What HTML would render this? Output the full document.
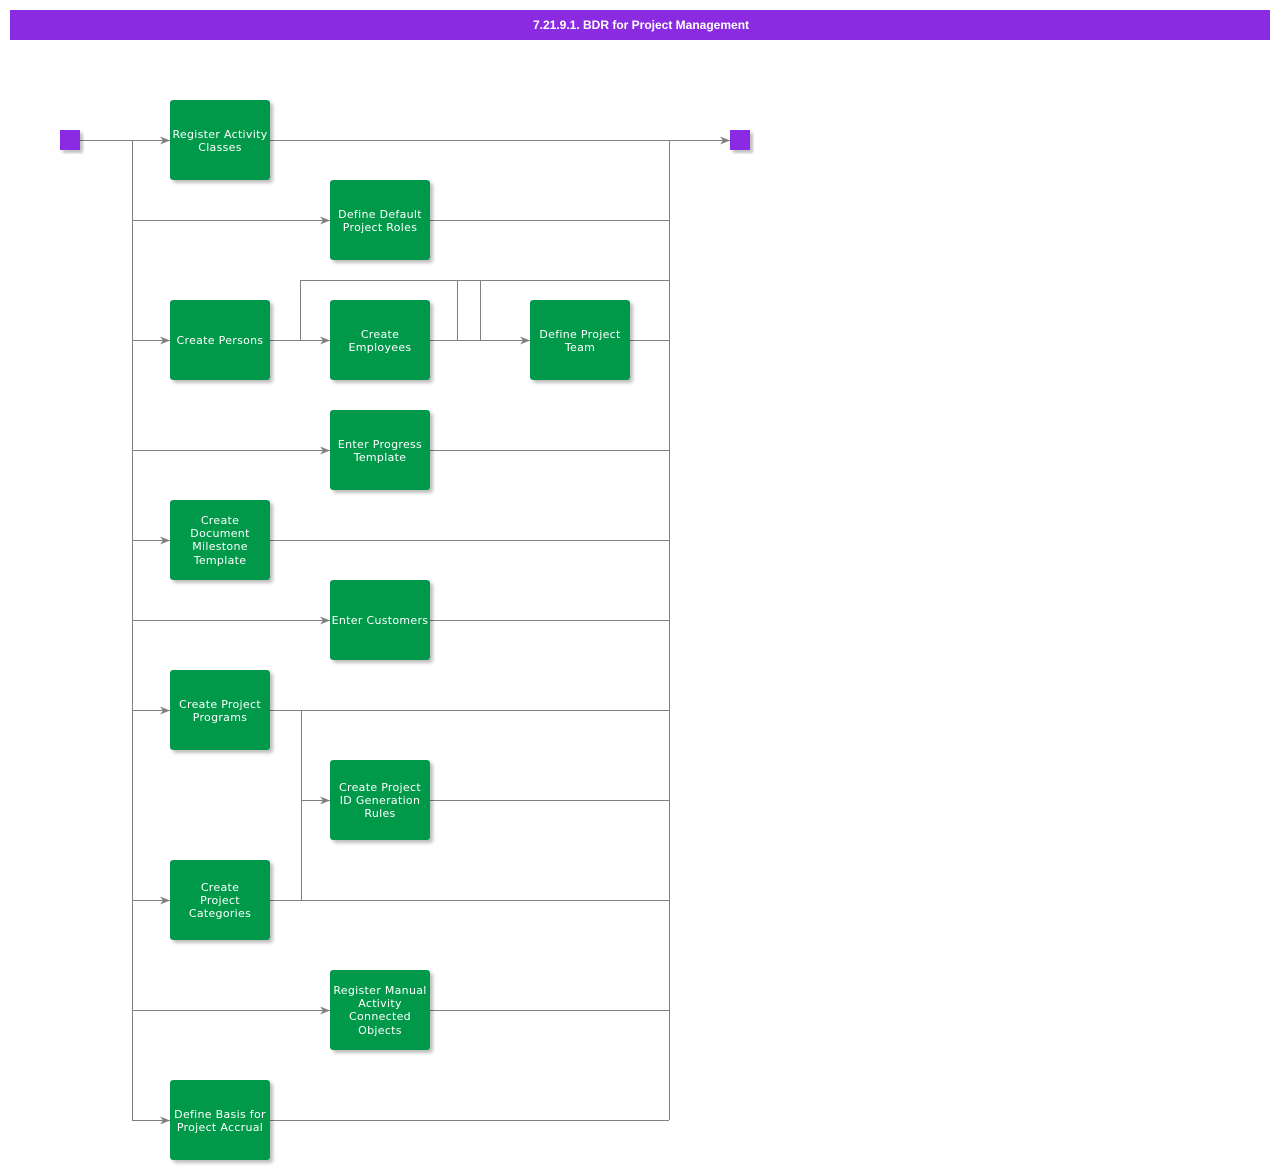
<!DOCTYPE html>
<html><head><meta charset="utf-8"><style>
body{margin:0;background:#fff;width:1280px;height:1170px;overflow:hidden}
svg text{font-family:"DejaVu Sans","Liberation Sans",sans-serif;font-size:11px;fill:#fff;text-anchor:middle;letter-spacing:0.3px}
</style></head><body>
<svg width="1280" height="1170" xmlns="http://www.w3.org/2000/svg">
<defs>
<marker id="a" markerWidth="10" markerHeight="8" refX="10" refY="4" orient="auto" markerUnits="userSpaceOnUse"><path d="M0,0 L10,4 L0,8 L3,4 z" fill="#808080"/></marker>
<filter id="s" x="-10%" y="-10%" width="130%" height="130%"><feDropShadow dx="3" dy="3" stdDeviation="1.5" flood-color="#000" flood-opacity="0.25"/></filter>
</defs>
<rect x="10" y="10" width="1260" height="30" fill="#8a2be2"/>
<text x="641" y="29" style="font-family:'Liberation Sans',sans-serif;font-weight:bold;font-size:12px;letter-spacing:0">7.21.9.1. BDR for Project Management</text>
<g stroke="#808080" stroke-width="1" fill="none">
<path d="M80,140.5 H170" marker-end="url(#a)"/>
<path d="M132.5,140 V1120"/>
<path d="M669.5,140 V1120"/>
<path d="M270,140.5 H730" marker-end="url(#a)"/>
<path d="M132,220.5 H330" marker-end="url(#a)"/><path d="M430,220.5 H669"/>
<path d="M132,340.5 H170" marker-end="url(#a)"/>
<path d="M270,340.5 H330" marker-end="url(#a)"/>
<path d="M300.5,340 V280.5 H669"/>
<path d="M430,340.5 H530" marker-end="url(#a)"/>
<path d="M457.5,340 V280.5"/><path d="M480.5,340 V280.5"/>
<path d="M630,340.5 H669"/>
<path d="M132,450.5 H330" marker-end="url(#a)"/><path d="M430,450.5 H669"/>
<path d="M132,540.5 H170" marker-end="url(#a)"/><path d="M270,540.5 H669"/>
<path d="M132,620.5 H330" marker-end="url(#a)"/><path d="M430,620.5 H669"/>
<path d="M132,710.5 H170" marker-end="url(#a)"/><path d="M270,710.5 H669"/>
<path d="M301.5,710 V900"/>
<path d="M301,800.5 H330" marker-end="url(#a)"/><path d="M430,800.5 H669"/>
<path d="M132,900.5 H170" marker-end="url(#a)"/><path d="M270,900.5 H669"/>
<path d="M132,1010.5 H330" marker-end="url(#a)"/><path d="M430,1010.5 H669"/>
<path d="M132,1120.5 H170" marker-end="url(#a)"/><path d="M270,1120.5 H669"/>
</g>
<rect x="60" y="130" width="20" height="20" fill="#8a2be2" filter="url(#s)"/>
<rect x="730" y="130" width="20" height="20" fill="#8a2be2" filter="url(#s)"/>
<g fill="#00994a" filter="url(#s)">
<rect x="170" y="100" width="100" height="80" rx="3"/>
<rect x="330" y="180" width="100" height="80" rx="3"/>
<rect x="170" y="300" width="100" height="80" rx="3"/>
<rect x="330" y="300" width="100" height="80" rx="3"/>
<rect x="530" y="300" width="100" height="80" rx="3"/>
<rect x="330" y="410" width="100" height="80" rx="3"/>
<rect x="170" y="500" width="100" height="80" rx="3"/>
<rect x="330" y="580" width="100" height="80" rx="3"/>
<rect x="170" y="670" width="100" height="80" rx="3"/>
<rect x="330" y="760" width="100" height="80" rx="3"/>
<rect x="170" y="860" width="100" height="80" rx="3"/>
<rect x="330" y="970" width="100" height="80" rx="3"/>
<rect x="170" y="1080" width="100" height="80" rx="3"/>
</g>
<text x="220" y="138">Register Activity</text><text x="220" y="151">Classes</text>
<text x="380" y="218">Define Default</text><text x="380" y="231">Project Roles</text>
<text x="220" y="344">Create Persons</text>
<text x="380" y="338">Create</text><text x="380" y="351">Employees</text>
<text x="580" y="338">Define Project</text><text x="580" y="351">Team</text>
<text x="380" y="448">Enter Progress</text><text x="380" y="461">Template</text>
<text x="220" y="524">Create</text><text x="220" y="537">Document</text><text x="220" y="550">Milestone</text><text x="220" y="564">Template</text>
<text x="380" y="624">Enter Customers</text>
<text x="220" y="708">Create Project</text><text x="220" y="721">Programs</text>
<text x="380" y="791">Create Project</text><text x="380" y="804">ID Generation</text><text x="380" y="817">Rules</text>
<text x="220" y="891">Create</text><text x="220" y="904">Project</text><text x="220" y="917">Categories</text>
<text x="380" y="994">Register Manual</text><text x="380" y="1007">Activity</text><text x="380" y="1020">Connected</text><text x="380" y="1034">Objects</text>
<text x="220" y="1118">Define Basis for</text><text x="220" y="1131">Project Accrual</text>
</svg>
</body></html>
